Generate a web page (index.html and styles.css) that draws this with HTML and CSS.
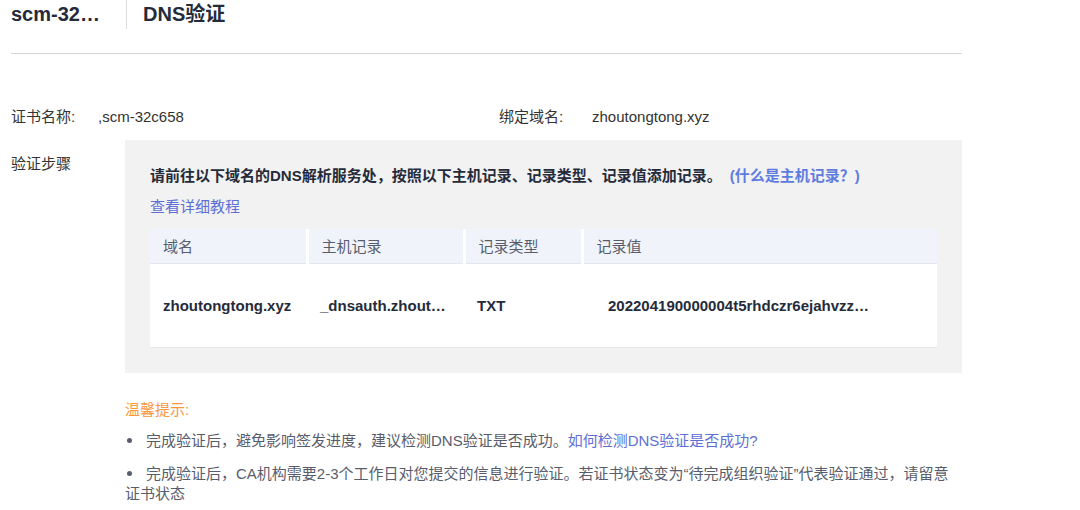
FILE: index.html
```html
<!DOCTYPE html>
<html lang="zh">
<head>
<meta charset="utf-8">
<link rel="stylesheet" href="styles.css">
</head>
<body>
<div class="page">
  <div class="header">
    <div class="crumb">scm-32…</div>
    <div class="divider"></div>
    <div class="title">DNS验证</div>
  </div>
  <div class="rule"></div>
  <div class="info-row">
    <div class="info-item">
      <span class="label">证书名称:</span>
      <span class="value">,scm-32c658</span>
    </div>
    <div class="info-item second">
      <span class="label">绑定域名:</span>
      <span class="value">zhoutongtong.xyz</span>
    </div>
  </div>
  <div class="steps">
    <div class="steps-label">验证步骤</div>
    <div class="steps-box">
      <p class="instr">请前往以下域名的DNS解析服务处，按照以下主机记录、记录类型、记录值添加记录。 <a class="help">(什么是主机记录？)</a></p>
      <a class="tutorial">查看详细教程</a>
      <table class="records">
        <thead>
          <tr>
            <th class="c1">域名</th>
            <th class="c2">主机记录</th>
            <th class="c3">记录类型</th>
            <th class="c4">记录值</th>
          </tr>
        </thead>
        <tbody>
          <tr>
            <td class="c1">zhoutongtong.xyz</td>
            <td class="c2"><span class="clip">_dnsauth.zhout…</span></td>
            <td class="c3">TXT</td>
            <td class="c4 val"><span class="clip wide">202204190000004t5rhdczr6ejahvzz…</span></td>
          </tr>
        </tbody>
      </table>
    </div>
  </div>
  <div class="tips">
    <div class="tips-title">温馨提示:</div>
    <ul class="tip-list">
      <li>完成验证后，避免影响签发进度，建议检测DNS验证是否成功。<a class="link">如何检测DNS验证是否成功?</a></li>
      <li>完成验证后，CA机构需要2-3个工作日对您提交的信息进行验证。若证书状态变为“待完成组织验证”代表验证通过，请留意证书状态</li>
    </ul>
  </div>
</div>
</body>
</html>
```
FILE: styles.css
```css
* { box-sizing: border-box; }
body {
  margin: 0;
  background: #fff;
  font-family: "Liberation Sans", "Noto Sans CJK SC", sans-serif;
  font-size: 15px;
  color: #252b3a;
}
.page {
  width: 962px;
  padding-left: 11px;
}
.header {
  display: flex;
  align-items: center;
  height: 29px;
}
.crumb {
  font-size: 20px;
  font-weight: bold;
  width: 115px;
  color: #252b3a;
  line-height: 29px;
}
.divider {
  width: 1px;
  height: 29px;
  background: #dcdcdc;
}
.title {
  font-size: 20px;
  font-weight: bold;
  margin-left: 16px;
  line-height: 29px;
}
.rule {
  height: 1px;
  background: #d6d6d6;
  margin-top: 24px;
}
.info-row {
  display: flex;
  margin-top: 53px;
  line-height: 20px;
  color: #333;
}
.info-item { display: flex; width: 488px; flex-shrink: 0; }
.info-item .label { width: 87px; }
.info-item.second { width: auto; flex: 1; }
.info-item.second .label { width: 93px; }
.steps {
  display: flex;
  margin-top: 13px;
}
.steps-label {
  width: 114px;
  padding-top: 14px;
  line-height: 20px;
  color: #333;
}
.steps-box {
  flex: 1;
  background: #f2f2f2;
  padding: 25px 25px 25px 25px;
  height: 233px;
}
.instr {
  margin: 0;
  font-weight: bold;
  line-height: 22px;
  color: #252b3a;
  white-space: nowrap;
}
.help { color: #5e7ce0; font-weight: bold; margin-left: 4px; }
.tutorial {
  display: block;
  margin-top: 10px;
  color: #5e6fd6;
  line-height: 20px;
}
.records {
  margin-top: 12px;
  width: 787px;
  border-collapse: collapse;
  table-layout: fixed;
}
.records th {
  background: #f0f3fa;
  height: 34px;
  text-align: left;
  font-weight: normal;
  padding: 0 13px;
  color: #575d6c;
  border-left: 3px solid #fff;
  border-bottom: 1px solid #e4e6eb;
}
.records th.c1 { border-left: none; }
.records .c1 { width: 157px; }
.records .c2 { width: 157px; }
.records .c3 { width: 118px; }
.records td {
  background: #fff;
  height: 84px;
  padding: 0 13px;
  font-weight: bold;
  color: #252b3a;
  border-bottom: 1px solid #e4e6eb;
  white-space: nowrap;
}
.records td.val { padding-left: 26px; }
.clip {
  display: inline-block;
  vertical-align: middle;
  white-space: nowrap;
}
.tips {
  margin-left: 114px;
  margin-top: 27px;
}
.tips-title {
  color: #fa9841;
  line-height: 20px;
}
.tip-list {
  list-style: none;
  margin: 11px 0 0;
  padding: 0;
}
.tip-list li {
  line-height: 20px;
  margin-bottom: 13px;
  color: #575d6c;
}
.tip-list li::before {
  content: "";
  display: inline-block;
  width: 5px;
  height: 5px;
  border-radius: 50%;
  background: #575d6c;
  vertical-align: middle;
  margin: 0 14px 3px 2px;
}
.link { color: #5e6fd6; }
```
